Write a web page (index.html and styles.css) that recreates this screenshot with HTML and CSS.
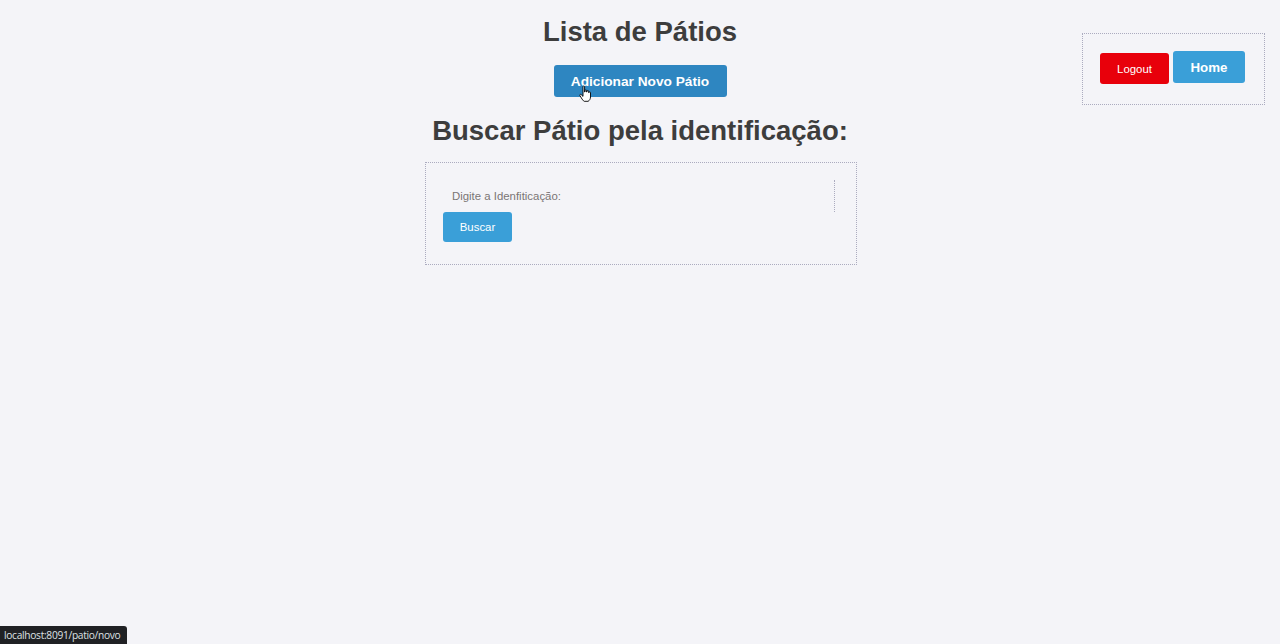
FILE: index.html
```html
<!DOCTYPE html>
<html lang="pt-BR">
<head>
<meta charset="utf-8">
<title>Lista de Pátios</title>
<link rel="stylesheet" href="styles.css">
</head>
<body>
<div class="page">
  <div class="side"></div>
  <main class="center">
    <h1 class="title">Lista de Pátios</h1>
    <a class="btn-add" href="#">Adicionar Novo Pátio
      <svg class="cursor" width="13" height="17" viewBox="0 0 13 17"><path d="M4 1.6c0-.9 1.6-.9 1.6 0V7h.4V5.6c0-.9 1.6-.9 1.6 0V7h.4V6.2c0-.9 1.6-.9 1.6 0V7.6h.3c0-.9 1.6-.9 1.6 0V12c0 2-1 3.5-2.4 4.3H5.2C4.2 15.8 3.3 14.5 2.4 13L.9 10.6c-.5-.9.6-1.7 1.3-1L4 11.4z" fill="#fff" stroke="#000" stroke-width="0.9" stroke-linejoin="round"/></svg>
    </a>
    <h2 class="subtitle">Buscar Pátio pela identificação:</h2>
    <form class="search-box">
      <div class="field">
        <label class="field-label">Digite a Idenfiticação:</label>
        <span class="field-input"></span>
      </div>
      <button type="button" class="btn-search">Buscar</button>
    </form>
  </main>
  <div class="side side-right">
    <nav class="nav-box">
      <button type="button" class="btn-logout">Logout</button>
      <button type="button" class="btn-home">Home</button>
    </nav>
  </div>
</div>
<div class="status-bar">localhost:8091/patio/novo</div>
</body>
</html>
```

FILE: styles.css
```css
html, body {
  margin: 0;
  padding: 0;
  height: 100%;
}

body {
  background: #f4f4f8;
  font-family: "Liberation Sans", Arial, sans-serif;
  color: #3d3d3d;
}

.page {
  display: grid;
  grid-template-columns: 1fr 440px 1fr;
}

.center {
  display: flex;
  flex-direction: column;
  align-items: center;
}

.title {
  margin: 16px 0 0;
  font-size: 27.5px;
  line-height: 32px;
  font-weight: bold;
  color: #3d3d3d;
}

.btn-add {
  position: relative;
  margin-top: 17px;
  height: 32px;
  width: 173px;
  box-sizing: border-box;
  display: flex;
  align-items: center;
  justify-content: center;
  background: #2e86c1;
  color: #fff;
  font-weight: bold;
  font-size: 13.7px;
  text-decoration: none;
  border-radius: 3px;
}

.cursor {
  position: absolute;
  left: 25px;
  top: 20px;
}

.subtitle {
  margin: 18px 0 0;
  font-size: 27.5px;
  line-height: 32px;
  font-weight: bold;
  color: #3d3d3d;
}

.search-box {
  margin: 15px 0 0 2px;
  width: 432px;
  box-sizing: border-box;
  border: 1px dotted #ababbf;
  padding: 17px 21px 22px 17px;
  display: flex;
  flex-direction: column;
  align-items: flex-start;
}

.field {
  display: flex;
  align-items: center;
  height: 32px;
  width: 100%;
}

.field-label {
  padding-left: 9px;
  font-size: 11.4px;
  color: #7a7575;
}

.field-input {
  flex: 1;
  align-self: stretch;
  border-right: 1px dotted #ababbf;
}

.btn-search {
  width: 69px;
  height: 30px;
  border: none;
  border-radius: 3px;
  background: #3a9fd8;
  color: #fff;
  font-family: "Liberation Sans", Arial, sans-serif;
  font-size: 11.4px;
  padding: 0;
}

.side-right {
  display: flex;
  justify-content: flex-end;
  align-items: flex-start;
}

.nav-box {
  margin: 33px 15px 0 0;
  width: 183px;
  height: 72px;
  box-sizing: border-box;
  border: 1px dotted #ababbf;
  padding: 17px 0 0 17px;
  display: flex;
  align-items: flex-start;
  gap: 4px;
}

.btn-logout {
  margin-top: 2px;
  width: 69px;
  height: 31px;
  border: none;
  border-radius: 3px;
  background: #e8000b;
  color: #fff;
  font-family: "Liberation Sans", Arial, sans-serif;
  font-size: 11.4px;
  padding: 0;
}

.btn-home {
  width: 72px;
  height: 32px;
  border: none;
  border-radius: 3px;
  background: #3a9fd8;
  color: #fff;
  font-family: "Liberation Sans", Arial, sans-serif;
  font-weight: bold;
  font-size: 13.3px;
  padding: 0;
}

.status-bar {
  position: fixed;
  left: 0;
  bottom: 0;
  height: 18px;
  line-height: 18px;
  padding: 0 7px 0 4px;
  background: #202124;
  color: #dfe1e5;
  font-family: "Open Sans", "Liberation Sans", sans-serif;
  font-size: 10.2px;
  border-top-right-radius: 3px;
  letter-spacing: -0.3px;
}
```
